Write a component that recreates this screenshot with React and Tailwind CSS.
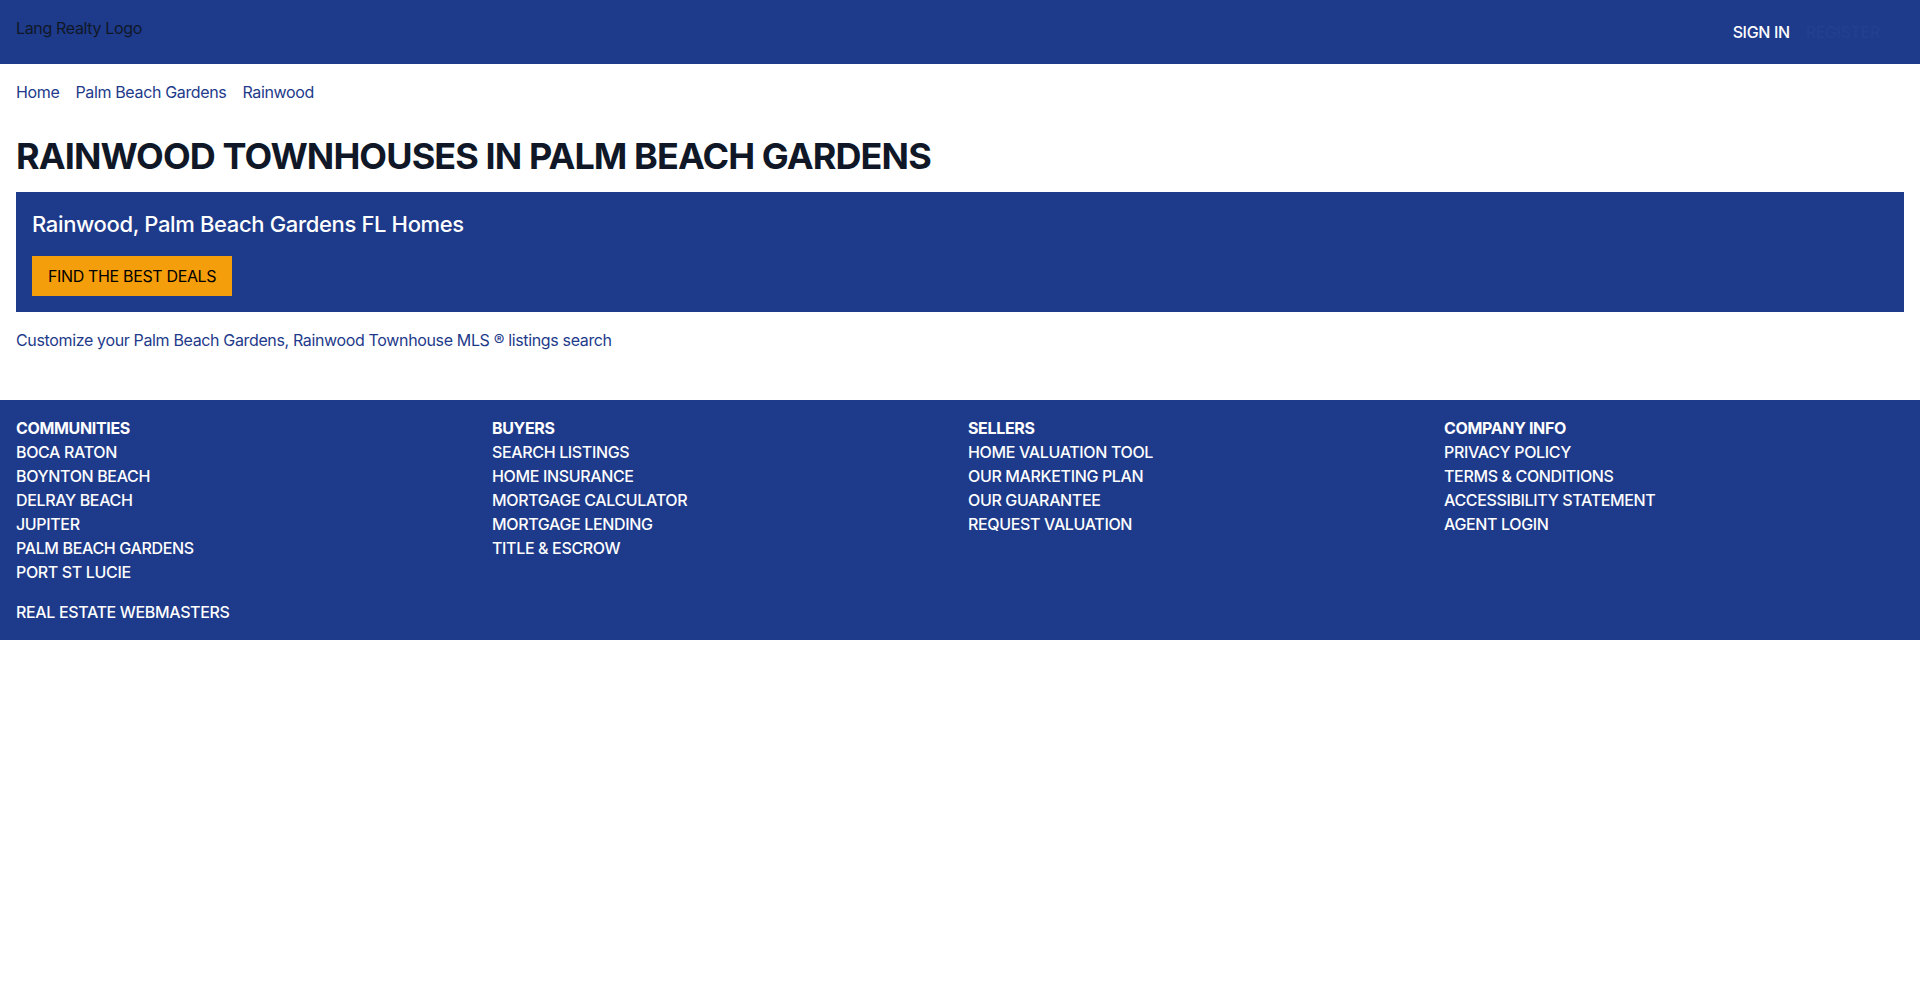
import React from "react";

const communities = ["BOCA RATON", "BOYNTON BEACH", "DELRAY BEACH", "JUPITER", "PALM BEACH GARDENS", "PORT ST LUCIE"];
const buyers = ["SEARCH LISTINGS", "HOME INSURANCE", "MORTGAGE CALCULATOR", "MORTGAGE LENDING", "TITLE & ESCROW"];
const sellers = ["HOME VALUATION TOOL", "OUR MARKETING PLAN", "OUR GUARANTEE", "REQUEST VALUATION"];
const company = ["PRIVACY POLICY", "TERMS & CONDITIONS", "ACCESSIBILITY STATEMENT", "AGENT LOGIN"];

function FooterColumn({ title, links }) {
    return (
        <div>
            <h3 className="font-bold">{title}</h3>
            <ul>
                {links.map((link) => (
                    <li key={link}>
                        <a href="#" className="font-medium">{link}</a>
                    </li>
                ))}
            </ul>
        </div>
    );
}

export default function App() {
    return (
        <div className="min-h-screen bg-white text-base tracking-[-0.022em] text-gray-900 font-['Inter',sans-serif]">
            {/* Header */}
            <header className="flex h-16 items-start justify-between bg-[#1e3a8a] px-4">
                <div className="pt-4 leading-6 text-gray-900">Lang Realty Logo</div>
                <nav className="flex h-16 items-center gap-4 pr-6">
                    <a href="#" className="font-medium text-white">SIGN IN</a>
                    <a href="#" className="font-medium text-[#21408f]">REGISTER</a>
                </nav>
            </header>

            <main className="px-4">
                {/* Breadcrumbs */}
                <nav className="flex gap-4 py-4 text-[#1e3a8a]">
                    <a href="#">Home</a>
                    <a href="#">Palm Beach Gardens</a>
                    <a href="#">Rainwood</a>
                </nav>

                <h1 className="mt-4 mb-4 text-4xl font-bold tracking-tight text-gray-900">RAINWOOD TOWNHOUSES IN PALM BEACH GARDENS</h1>

                <div className="bg-[#1e3a8a] p-4">
                    <h2 className="mb-4 text-[22px] leading-8 font-medium text-white">Rainwood, Palm Beach Gardens FL Homes</h2>
                    <button className="h-10 bg-[#f59e0b] px-4 text-black">FIND THE BEST DEALS</button>
                </div>

                <p className="mt-4 mb-12 text-[#1e3a8a]">
                    Customize your Palm Beach Gardens, Rainwood Townhouse MLS ® listings search
                </p>
            </main>

            {/* Footer */}
            <footer className="bg-[#1e3a8a] p-4 text-white">
                <div className="grid grid-cols-4 gap-4">
                    <FooterColumn title="COMMUNITIES" links={communities} />
                    <FooterColumn title="BUYERS" links={buyers} />
                    <FooterColumn title="SELLERS" links={sellers} />
                    <FooterColumn title="COMPANY INFO" links={company} />
                </div>
                <div className="mt-4">
                    <a href="#" className="font-medium">REAL ESTATE WEBMASTERS</a>
                </div>
            </footer>
        </div>
    );
}
